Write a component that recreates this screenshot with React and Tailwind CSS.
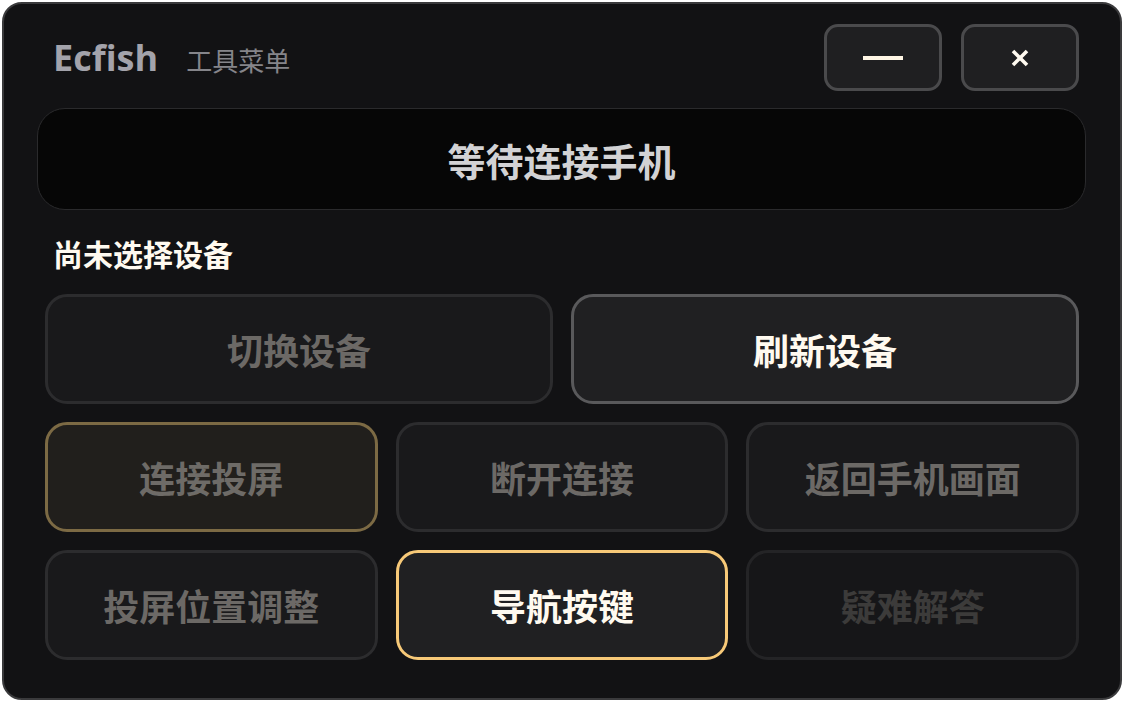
export default function App() {
  const rowOne = [
    { label: '切换设备', tone: 'muted' },
    { label: '刷新设备', tone: 'bright' },
  ];
  const rowTwo = [
    { label: '连接投屏', tone: 'gold' },
    { label: '断开连接', tone: 'muted' },
    { label: '返回手机画面', tone: 'muted' },
  ];
  const rowThree = [
    { label: '投屏位置调整', tone: 'muted' },
    { label: '导航按键', tone: 'active' },
    { label: '疑难解答', tone: 'dim' },
  ];

  const tones = {
    muted: 'bg-[#19191b] border-[#2c2c2e] text-[#6c6966]',
    bright: 'bg-[#202022] border-[#59595b] text-[#fffaf0]',
    gold: 'bg-[#211f1c] border-[#7c6a44] text-[#6e6b67]',
    active: 'bg-[#202022] border-[#f7c978] text-[#fffaf0]',
    dim: 'bg-[#161618] border-[#242426] text-[#3c3b3a]',
  };

  const cjk = { fontFamily: '"Noto Sans CJK SC", "Noto Sans", sans-serif' };

  const Btn = ({ b }) => (
    <button
      className={`h-[110px] rounded-[22px] border-[3px] text-[36px] font-bold flex items-center justify-center ${tones[b.tone]}`}
      style={cjk}
    >
      {b.label}
    </button>
  );

  return (
    <div className="w-[1124px] h-[702px] bg-white p-[2px]">
      <div className="h-full rounded-[20px] border-2 border-[#3a3a3c] bg-[#121214] flex flex-col px-[41px] pt-[20px]">
        {/* Header */}
        <div className="flex items-center h-[67px]">
          <div className="flex items-baseline gap-[28px] pl-[8px]">
            <span className="text-[36px] font-bold text-[#a3a3ab]" style={{ fontFamily: '"Open Sans", sans-serif' }}>Ecfish</span>
            <span className="text-[26px] text-[#85858a]" style={cjk}>工具菜单</span>
          </div>
          <div className="ml-auto flex gap-[19px]">
            <button className="w-[118px] h-[67px] rounded-[14px] border-[3px] border-[#4a4a4c] bg-[#1f1f21] flex items-center justify-center">
              <span className="block w-[40px] h-[4px] bg-[#fff6e5]" />
            </button>
            <button className="w-[118px] h-[67px] rounded-[14px] border-[3px] border-[#4a4a4c] bg-[#1f1f21] flex items-center justify-center">
              <svg width="20" height="20" viewBox="0 0 20 20">
                <path d="M3 3 L17 17 M17 3 L3 17" stroke="#fffaf0" strokeWidth="3.6" strokeLinecap="butt" />
              </svg>
            </button>
          </div>
        </div>

        {/* Status */}
        <div className="-ml-[8px] -mr-[7px] mt-[17px] h-[102px] rounded-[28px] border border-[#2a2a2c] bg-[#060606] flex items-center justify-center">
          <span className="text-[38px] font-bold text-[#d2d2d4]" style={cjk}>等待连接手机</span>
        </div>

        <div className="pl-[8px] mt-[21px] h-[44px] flex items-center text-[30px] font-bold text-[#fffaf0]" style={cjk}>
          尚未选择设备
        </div>

        <div className="mt-[19px] grid grid-cols-2 gap-[18px]">
          {rowOne.map(b => <Btn key={b.label} b={b} />)}
        </div>
        <div className="mt-[18px] grid grid-cols-3 gap-[18px]">
          {rowTwo.map(b => <Btn key={b.label} b={b} />)}
        </div>
        <div className="mt-[18px] grid grid-cols-3 gap-[18px]">
          {rowThree.map(b => <Btn key={b.label} b={b} />)}
        </div>
      </div>
    </div>
  );
}
